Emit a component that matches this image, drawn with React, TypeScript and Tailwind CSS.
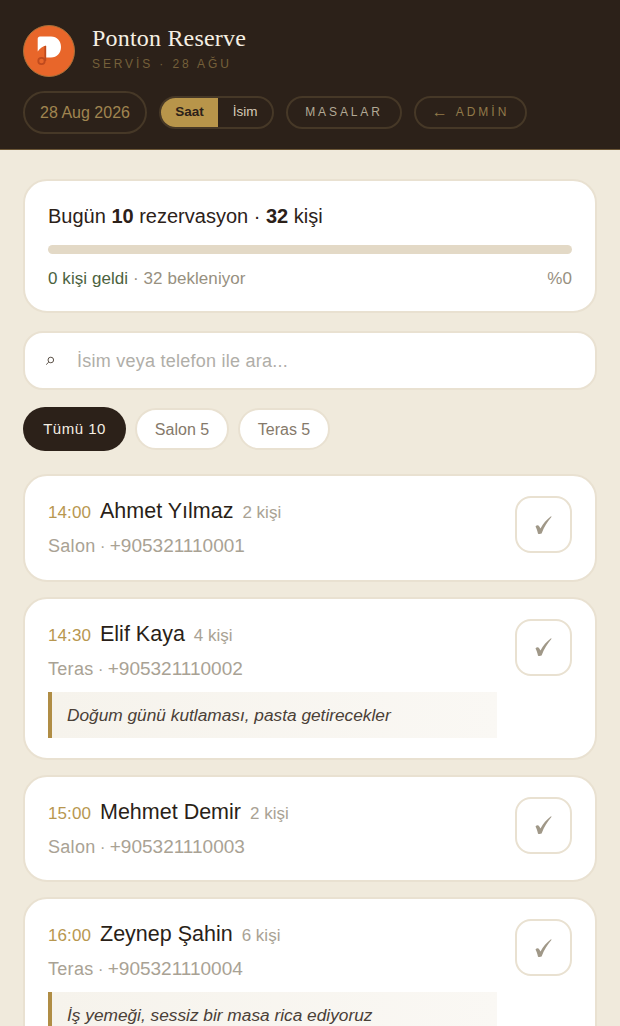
import React from "react";

const font = { fontFamily: '"Liberation Sans", Arial, sans-serif' };

function Logo() {
  return (
    <svg width="52" height="52" viewBox="0 0 52 52" className="shrink-0">
      <circle cx="26" cy="26" r="25.5" fill="#e8662a" stroke="#a8703a" strokeWidth="1" />
      <path d="M17 11.5 H28 C34 11.5 38 16 38 22 C38 28 34 32.5 28 32.5 H23 V20.5 C20 21 17 23 14.7 26.5 V14 C14.7 12.5 15.5 11.5 17 11.5 Z" fill="#fff" />
      <path d="M22.3 21 V36" stroke="#bf4a1e" strokeWidth="1.8" fill="none" />
      <circle cx="18.5" cy="36" r="3.2" fill="none" stroke="#bf4a1e" strokeWidth="1.8" />
    </svg>
  );
}

function Check() {
  return (
    <svg width="17" height="18" viewBox="0 0 17 18" fill="#a09888">
      <path d="M0.5 10.5 C1.5 9.2 3.2 9 4 10 L5.5 12.5 C8 8 11.5 3.5 16 0.3 L16.6 0.8 C12.5 5.5 9 11 6.6 17.5 C5.5 18 4 18 3 17.7 C2.5 15 1.5 12.5 0.5 10.5 Z" />
    </svg>
  );
}

type R = { time: string; name: string; count: string; area: string; phone: string; note?: string };

const rows: R[] = [
  { time: "14:00", name: "Ahmet Yılmaz", count: "2 kişi", area: "Salon", phone: "+905321110001" },
  { time: "14:30", name: "Elif Kaya", count: "4 kişi", area: "Teras", phone: "+905321110002", note: "Doğum günü kutlaması, pasta getirecekler" },
  { time: "15:00", name: "Mehmet Demir", count: "2 kişi", area: "Salon", phone: "+905321110003" },
  { time: "16:00", name: "Zeynep Şahin", count: "6 kişi", area: "Teras", phone: "+905321110004", note: "İş yemeği, sessiz bir masa rica ediyoruz" },
];

function Row({ r }: { r: R }) {
  return (
    <div className="flex shrink-0 items-start justify-between rounded-[24px] border-2 border-[#e9e1d1] bg-white pl-[23px] pr-[23px] pt-[19px] pb-[18.5px]">
      <div className="w-[449px]">
        <div className="flex h-[34px] items-baseline">
          <span className="w-[52px] text-[17px] tracking-[0.1px] text-[#b8974f]">{r.time}</span>
          <span className="text-[21.5px] text-[#2a1f18]">{r.name}</span>
          <span className="ml-[9px] text-[17px] text-[#a9a294]">{r.count}</span>
        </div>
        <div className="mt-[2px] h-[30px] text-[18px] leading-[30px] text-[#a9a294]">
          <span className="tracking-[0.3px]">{r.area}</span>
          <span className="text-[16px]"> · </span>
          <span className="text-[19px]">{r.phone}</span>
        </div>
        {r.note && (
          <div className="mt-[8px] mb-[1.5px] h-[46px] border-l-4 border-[#b08d45] bg-linear-to-r from-[#f6f3ec] to-[#faf8f4] pl-[15px] text-[17.3px] italic leading-[46px] text-[#4a4037]">
            {r.note}
          </div>
        )}
      </div>
      <div className="mt-[1px] flex h-[57px] w-[57px] items-center justify-center rounded-[16px] border-2 border-[#e9e1d1] bg-white">
        <Check />
      </div>
    </div>
  );
}

export default function App() {
  return (
    <div className="h-[1026px] w-[620px] overflow-hidden bg-[#f0eadc]" style={font}>
      <header className="h-[150px] border-b border-[#6b5636] bg-[#2c2119] px-[23px] pt-[25px]">
        <div className="flex items-start gap-[17px]">
          <Logo />
          <div className="-mt-[1px]">
            <div className="text-[24px] leading-[28px] tracking-[0.2px] text-[#f5efe3]" style={{ fontFamily: '"Liberation Serif", serif' }}>
              Ponton Reserve
            </div>
            <div className="mt-[4px] text-[12px] leading-[16px] tracking-[0.24em] text-[#75603a]">SERVİS · 28 AĞU</div>
          </div>
        </div>
        <div className="mt-[14px] flex items-center gap-[12px]">
          <div className="flex h-[43px] w-[124px] items-center justify-center rounded-full border-2 border-[#463827] text-[16px] text-[#a08550]">
            28 Aug 2026
          </div>
          <div className="flex h-[33px] w-[115px] overflow-hidden rounded-full border-2 border-[#463827] text-[13.5px]">
            <div className="flex w-[57px] items-center justify-center bg-[#b8954a] pb-[1px] font-bold text-[#2c2119]">Saat</div>
            <div className="flex flex-1 items-center justify-center pb-[1px] text-[#d6cbb6]">İsim</div>
          </div>
          <div className="flex h-[33px] w-[116px] items-center justify-center rounded-full border-2 border-[#463827] pb-[1px] text-[12px] tracking-[0.24em] text-[#b3a995]">
            MASALAR
          </div>
          <div className="flex h-[33px] w-[113px] items-center justify-center rounded-full border-2 border-[#463827] pb-[1px] text-[12px] tracking-[0.25em] text-[#927a49]">
            <span className="mr-[8px] text-[16px] tracking-normal">←</span>
            ADMİN
          </div>
        </div>
      </header>

      <main className="flex flex-col px-[23px] pt-[29px]">
        <section className="h-[134px] rounded-[24px] border-2 border-[#e9e1d1] bg-white px-[23px] pt-[21px]">
          <div className="text-[20px] leading-[28px] text-[#2c2119]">
            Bugün <b>10</b> rezervasyon · <b>32</b> kişi
          </div>
          <div className="mt-[15px] h-[9px] rounded-full bg-[#e3d9c6]" />
          <div className="mt-[13px] flex justify-between text-[17px] leading-[24px] tracking-[0.07px] text-[#97907f]">
            <span>
              <span className="text-[#4b6240]">0 kişi geldi</span> · 32 bekleniyor
            </span>
            <span>%0</span>
          </div>
        </section>

        <div className="mt-[18px] flex h-[59px] items-center rounded-[20px] border-2 border-[#e9e1d1] bg-white pl-[20px]">
          <svg width="10" height="10" viewBox="0 0 10 10" fill="none" stroke="#5a5046" strokeWidth="1">
            <circle cx="5.8" cy="4" r="2.8" />
            <path d="M3.8 6 L1.2 8.6" />
          </svg>
          <span className="ml-[22px] pt-[1px] text-[18px] tracking-[0.25px] text-[#b0aea8]">İsim veya telefon ile ara...</span>
        </div>

        <div className="mt-[17px] flex items-center gap-[9px]">
          <div className="flex h-[44px] w-[103px] items-center justify-center rounded-full bg-[#2c2119] pt-[1px] text-[15px] tracking-[0.5px] text-[#f5efe3]">Tümü 10</div>
          <div className="flex h-[42px] w-[94px] items-center justify-center rounded-full border-2 border-[#e9e1d1] bg-white pt-[1px] text-[16px] text-[#85796a]">Salon 5</div>
          <div className="flex h-[42px] w-[92px] items-center justify-center rounded-full border-2 border-[#e9e1d1] bg-white pt-[1px] text-[16px] text-[#85796a]">Teras 5</div>
        </div>

        <div className="mt-[23px] flex flex-col gap-[15px]">
          {rows.map((r) => (
            <Row key={r.time} r={r} />
          ))}
        </div>
      </main>
    </div>
  );
}
